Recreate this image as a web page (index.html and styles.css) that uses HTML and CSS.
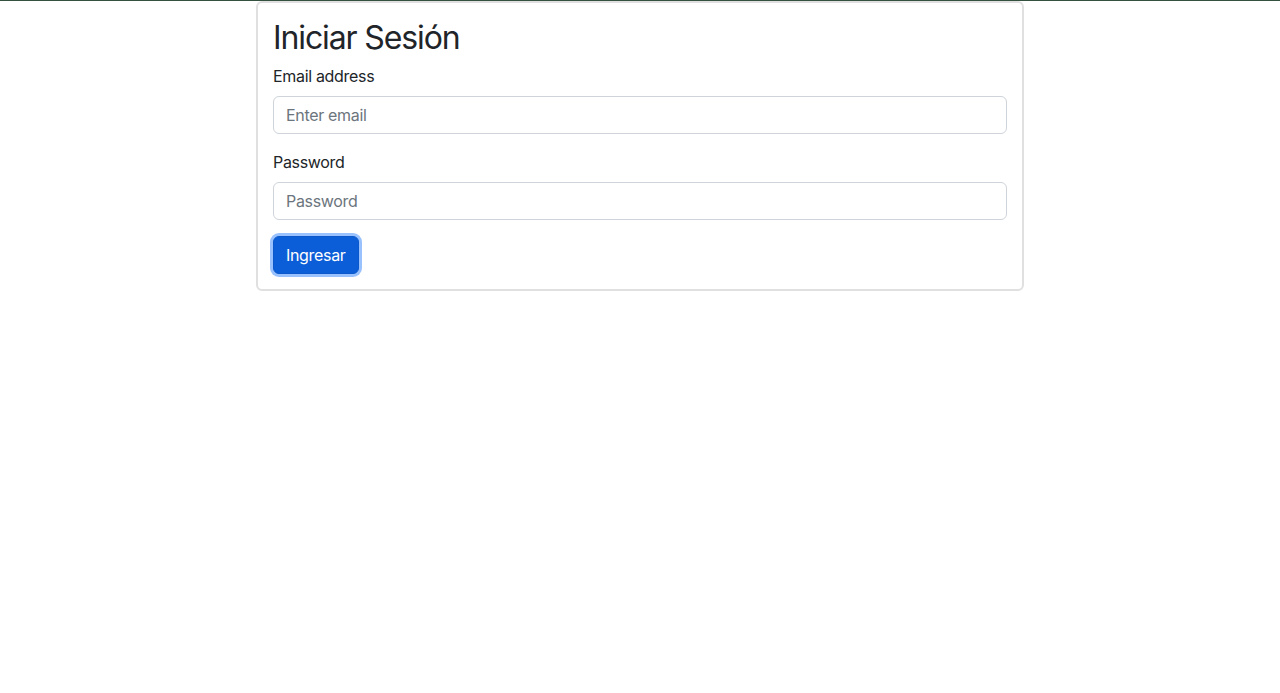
FILE: index.html
```html
<!DOCTYPE html>
<html lang="es">
<head>
<meta charset="utf-8">
<title>Iniciar Sesión</title>
<link rel="stylesheet" href="styles.css">
</head>
<body>
<div class="topline"></div>
<main class="card">
  <h2 class="title">Iniciar Sesión</h2>
  <form class="form">
    <div class="field">
      <label class="label" for="email">Email address</label>
      <input class="input" id="email" type="email" placeholder="Enter email">
    </div>
    <div class="field">
      <label class="label" for="password">Password</label>
      <input class="input" id="password" type="password" placeholder="Password">
    </div>
    <button class="btn" type="button">Ingresar</button>
  </form>
</main>
</body>
</html>
```
FILE: styles.css
```css
* { box-sizing: border-box; }
html, body { margin: 0; padding: 0; background: #fff; }
body {
  font-family: Inter, "Noto Sans", "Liberation Sans", sans-serif;
  font-size: 16px;
  line-height: 1.5;
  color: #212529;
  letter-spacing: -0.02em;
}
.topline { height: 1px; background: #34503f; }
.card {
  width: 768px;
  margin: 0 auto;
  border: 2px solid #e0e0e0;
  border-radius: 6px;
  padding: 15px;
}
.title {
  margin: 0 0 8px;
  padding-top: 2px;
  height: 38px;
  font-size: 32px;
  font-weight: 400;
  line-height: 36px;
  letter-spacing: -0.035em;
}
.form { display: flex; flex-direction: column; align-items: flex-start; }
.field { width: 100%; margin-bottom: 16px; }
.label { display: block; margin-bottom: 8px; font-size: 16px; }
.input {
  display: block;
  width: 100%;
  height: 38px;
  padding: 6px 12px;
  font: inherit;
  letter-spacing: -0.02em;
  color: #212529;
  border: 1px solid #ced4da;
  border-radius: 6px;
  background: #fff;
}
.input::placeholder { color: #6c757d; }
.btn {
  font: inherit;
  letter-spacing: -0.02em;
  color: #fff;
  background: #0b5ed7;
  border: 1px solid #0a58ca;
  border-radius: 6px;
  padding: 6px 12px;
  height: 38px;
  box-shadow: 0 0 0 3px rgba(49,132,253,.5);
}
```
